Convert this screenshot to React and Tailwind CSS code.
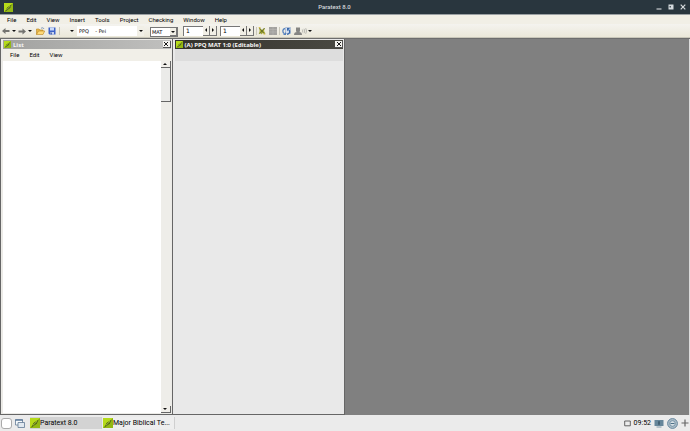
import React from "react";

const UI = "font-['DejaVu_Sans',sans-serif]";

function Logo({ className }) {
  return (
    <svg viewBox="0 0 9 9" className={className} aria-hidden="true">
      <rect width="9" height="9" fill="#7fa012" />
      <path d="M0 0H9L0 9Z" fill="#b5da1a" />
      <path d="M9 1V9H1Z" fill="#93b814" />
      <path d="M1.200 8.500 3.200 4.500 7.500 1.500 6.200 5Z" fill="#3f5510" />
      <path d="M2.500 6.800 6.500 2.800" stroke="#c5df4a" strokeWidth=".8" />
    </svg>
  );
}

function Caret({ dir = "down", className = "w-[4px] h-[2px]" }) {
  const d = {
    down: "M0 0H4L2 2Z",
    up: "M0 2H4L2 0Z",
    left: "M2 0V4L0 2Z",
    right: "M0 0V4L2 2Z",
  }[dir];
  const box = dir === "left" || dir === "right" ? "0 0 2 4" : "0 0 4 2";
  return (
    <svg viewBox={box} className={className} aria-hidden="true">
      <path d={d} fill="#111" />
    </svg>
  );
}

function MenuBar({ items, label, className }) {
  return (
    <nav aria-label={label} className={`flex items-center gap-[10px] font-['Roboto',sans-serif] text-[6px] leading-[8px] text-black ${className}`}>
      {items.map((item) => (
        <button key={item} type="button">{item}</button>
      ))}
    </nav>
  );
}

function TitleBar() {
  return (
    <header className="flex h-[14px] shrink-0 items-center bg-[#29363e] px-1 text-[#d5dadd]">
      <Logo className="h-[9px] w-[9px]" />
      <h1 className="flex-1 text-center font-['Roboto',sans-serif] text-[6px] font-medium leading-[8px]">Paratext 8.0</h1>
      <div className="flex gap-[6px]">
        <button type="button" aria-label="Minimize">
          <svg viewBox="0 0 6 6" className="h-[6px] w-[6px]"><path d="M.5 5H5.500" stroke="#c9ced1" strokeWidth="1.200" /></svg>
        </button>
        <button type="button" aria-label="Maximize">
          <svg viewBox="0 0 6 6" className="h-[6px] w-[6px]"><path d="M.5.5H5.500V5.500H.5Z" fill="#d5dadd" /><path d="M1.500 2H3V3.500H1.500Z" fill="#4b575e" /></svg>
        </button>
        <button type="button" aria-label="Close">
          <svg viewBox="0 0 6 6" className="h-[6px] w-[6px]"><path d="M.7.7 5.300 5.300M5.300.7.7 5.300" stroke="#d5dadd" strokeWidth="1.200" /></svg>
        </button>
      </div>
    </header>
  );
}

function Stepper({ label }) {
  return (
    <div className="flex h-[10px] items-stretch">
      <input
        aria-label={label}
        defaultValue="1"
        className={`w-[20px] border-l border-t border-[#777] bg-white pl-[2px] text-[6px] leading-[8px] outline-none ${UI}`}
      />
      <button type="button" aria-label={`Previous ${label}`} className="flex w-[7px] items-center justify-center border-b border-r border-[#777] bg-[#f1efe6]">
        <Caret dir="left" className="h-[4px] w-[2px]" />
      </button>
      <button type="button" aria-label={`Next ${label}`} className="flex w-[7px] items-center justify-center border-b border-r border-[#777] bg-[#f1efe6]">
        <Caret dir="right" className="h-[4px] w-[2px]" />
      </button>
    </div>
  );
}

function Arrow({ back }) {
  return (
    <svg viewBox="0 0 8 8" className="h-[8px] w-[8px]" aria-hidden="true">
      <path d={back ? "M0 4 3.500 1V3H7.500V5H3.500V7Z" : "M8 4.500 4.500 1.500V3.500H.5V5.500H4.500V7.500Z"} fill="#73736f" />
    </svg>
  );
}

function Toolbar() {
  return (
    <div role="toolbar" aria-label="Standard" className="flex h-[14px] shrink-0 items-center border-b border-[#c9c7ba] bg-linear-to-b from-[#f4f3ef] to-[#ebe8d9] pl-[2px]">
      <button type="button" aria-label="Back" className="flex items-center gap-[2px]"><Arrow back /><Caret className="h-[2px] w-[4px]" /></button>
      <button type="button" aria-label="Forward" className="ml-[2px] flex items-center gap-[2px]"><Arrow /><Caret className="h-[2px] w-[4px]" /></button>
      <button type="button" aria-label="Open" className="ml-[4px]">
        <svg viewBox="0 0 9 8" className="h-[8px] w-[9px]">
          <path d="M.5 7.500V2H3L4 3H7V4" fill="#e7b84b" stroke="#b88420" strokeWidth=".6" />
          <path d="M.5 7.500 2.500 4H8.700L7 7.500Z" fill="#ffda78" stroke="#b88420" strokeWidth=".6" />
          <path d="M5 1.500C6 .3 7.500.7 8 2" fill="none" stroke="#5577a8" strokeWidth=".7" />
        </svg>
      </button>
      <button type="button" aria-label="Save" className="ml-[3px]">
        <svg viewBox="0 0 8 8" className="h-[8px] w-[8px]">
          <path d="M.5.5H7.500V7.500H1.500L.5 6.500Z" fill="#3d62c8" />
          <path d="M2 .5H6V3.500H2Z" fill="#c9d9f8" />
          <path d="M2.300 5H6V7.500H2.300Z" fill="#c9d4ee" />
          <path d="M2.700 5.500H3.700V7.500H2.700Z" fill="#284394" />
        </svg>
      </button>
      <span className="ml-[3px] h-[8px] w-px bg-[#c9c7ba]" />
      <button type="button" aria-label="Project history" className="ml-[10px]"><Caret className="h-[2px] w-[4px]" /></button>
      <div className="relative ml-[3px] flex h-[10px]">
        <select aria-label="Project" className={`w-[67px] appearance-none bg-white pl-[2px] text-[5px] leading-[8px] text-black whitespace-pre ${UI}`}>
          <option>{"PPQ\u00a0\u00a0\u00a0\u00a0- Pei"}</option>
        </select>
        <span className="pointer-events-none absolute inset-y-0 right-0 flex w-[7px] items-center justify-center bg-[#f1efe6]"><Caret /></span>
      </div>
      <div className="relative ml-[6px] flex h-[10px] self-end">
        <select aria-label="Book" className={`w-[28px] appearance-none border border-[#777] bg-white pl-px text-[5px] leading-[8px] text-black ${UI}`}>
          <option>MAT</option>
        </select>
        <span className="pointer-events-none absolute inset-y-px right-px flex w-[7px] items-center justify-center border-b border-r border-[#777] bg-[#f1efe6]"><Caret /></span>
      </div>
      <div className="ml-[5px] flex gap-[3px]">
        <Stepper label="chapter" />
        <Stepper label="verse" />
      </div>
      <span className="ml-[2px] h-[8px] w-px bg-[#c9c7ba]" />
      <button type="button" aria-label="Show all" className="ml-px">
        <svg viewBox="0 0 8 8" className="h-[8px] w-[8px]">
          <path d="M1 1 4 3 7 1 6 4 7.500 6.500 5 6 3 7.500V5.500L.7 7 1.700 4Z" fill="#a8aa35" />
          <path d="M1.500 1 6.500 7M6.500 1 1.500 7" stroke="#68742a" strokeWidth="1" />
          <path d="M.7.7H2.500M5.500 7H7.300" stroke="#d5b631" />
        </svg>
      </button>
      <button type="button" aria-label="Layout" className="ml-[3px]">
        <svg viewBox="0 0 8 8" className="h-[8px] w-[8px]">
          <path d="M0 0H8V8H0Z" fill="#a3a29f" />
          <path d="M0 2.500H8M0 5H8M4 0V8" stroke="#bab9b5" strokeWidth=".6" />
        </svg>
      </button>
      <span className="ml-[2px] h-[8px] w-px bg-[#c9c7ba]" />
      <button type="button" aria-label="Send and receive" className="ml-[2px]">
        <svg viewBox="0 0 9 8" className="h-[8px] w-[9px]">
          <path d="M3.500.5H8.500V6.500H3.500Z" fill="#d6e1f0" stroke="#8ea5c6" strokeWidth=".6" />
          <path d="M3 1.500C.2 2 .2 5.500 2.500 6.800" fill="none" stroke="#5480bd" strokeWidth="1.300" />
          <path d="M1 8H4V5Z" fill="#5480bd" />
          <path d="M5 7.300C8 7 8.500 4 6.500 2.500" fill="none" stroke="#3768ad" strokeWidth="1.300" />
          <path d="M5 1V4.200L8 1Z" fill="#3768ad" />
        </svg>
      </button>
      <button type="button" aria-label="Chat" className="ml-[3px] flex items-center gap-px">
        <svg viewBox="0 0 13 8" className="h-[8px] w-[13px]">
          <path d="M2 .5H6V4.500L5 5C7 5.300 8 6 8 8H0C0 6 1 5.300 3 5L2 4.500Z" fill="#858583" />
          <path d="M8.300 2.500Q9.500 4 8.300 5.500M10 1.800Q11.500 4 10 6.200M11.700 1.200Q13.500 4 11.700 6.800" fill="none" stroke="#aaa9a5" strokeWidth=".8" />
        </svg>
        <Caret className="h-[2px] w-[4px]" />
      </button>
    </div>
  );
}

function ClosePane({ label }) {
  return (
    <button type="button" aria-label={label} className="flex h-[7px] w-[8px] items-center justify-center border-b border-r border-[#555] bg-[#f4f3ef]">
      <svg viewBox="0 0 4 4" className="h-[4px] w-[4px]"><path d="M0 0 4 4M4 0 0 4" stroke="#000" strokeWidth=".9" /></svg>
    </button>
  );
}

function PaneTitle({ title, bar }) {
  return (
    <div className={`flex h-[9px] shrink-0 items-center gap-[2px] pl-px text-[#f4f4f4] ${bar}`}>
      <Logo className="h-[7px] w-[7px]" />
      <h2 className="flex-1 font-['Noto_Sans',sans-serif] text-[6px] font-bold leading-[8px]">{title}</h2>
      <ClosePane label={`Close ${title}`} />
    </div>
  );
}

function ScrollBar() {
  return (
    <div className="flex w-[10px] shrink-0 flex-col bg-[#eeede9]">
      <button type="button" aria-label="Scroll up" className="flex h-[7px] items-center justify-center border-b border-r border-[#666] bg-[#f1efea]"><Caret dir="up" /></button>
      <div className="h-[34px] border-b border-r border-[#666] bg-[#ebebe9]" />
      <div className="flex-1" />
      <button type="button" aria-label="Scroll down" className="flex h-[7px] items-center justify-center border-b border-r border-[#666] bg-[#f1efea]"><Caret /></button>
    </div>
  );
}

function Workspace() {
  return (
    <main className="flex min-h-0 flex-1 border-t border-[#6d6d6d] bg-[#808080]">
      <div className="grid h-full w-1/2 grid-cols-2">
        <section className="flex min-w-0 flex-col border-b border-l border-r border-[#666] bg-[#ecebe7] pb-px pl-[2px] pr-px pt-px">
          <PaneTitle title="List" bar="bg-linear-to-r from-[#a2a2a0] to-[#c0c0be]" />
          <MenuBar label="List" items={["File", "Edit", "View"]} className="h-[12px] shrink-0 bg-[#f1efe8] pl-[7px]" />
          <div className="flex min-h-0 flex-1">
            <div className="flex-1 bg-white" />
            <ScrollBar />
          </div>
        </section>
        <section className="flex min-w-0 flex-col border-b border-r border-[#666] bg-[#e9e9e9] pl-[2px] pr-px pt-px">
          <PaneTitle title="(A) PPQ MAT 1:0 (Editable)" bar="bg-linear-to-r from-[#33322c] to-[#4a4942]" />
          <div className="h-[12px] shrink-0 bg-[#dddddd]" />
          <div className="flex-1" />
        </section>
      </div>
      <div className="ml-auto w-px bg-[#ddd]" />
    </main>
  );
}

function Task({ children, active }) {
  return (
    <button type="button" className={`flex h-[12px] w-[72px] items-center border-r border-[#cfcfcf] text-[7px] leading-[10px] text-black ${active ? "bg-[#d3d3d3]" : "bg-[#eeeeee]"}`}>
      <Logo className="h-[10px] w-[10px] shrink-0" />
      <span className="whitespace-nowrap">{children}</span>
    </button>
  );
}

function TaskBar() {
  return (
    <footer className="flex h-[16px] shrink-0 items-center bg-[#ebebeb] px-px font-['Roboto',sans-serif]">
      <button type="button" aria-label="Start" className="h-[11px] w-[11px] rounded-[3px] border border-[#aaa] bg-white" />
      <button type="button" aria-label="Show desktop" className="ml-[3px]">
        <svg viewBox="0 0 10 9" className="h-[9px] w-[10px]">
          <path d="M.5.8H7.500V6H.5Z" fill="#f7fafc" stroke="#637b96" strokeWidth=".8" />
          <path d="M.2 1H7.800" stroke="#4c6d91" strokeWidth="1.200" />
          <path d="M3 3.500H9.500V8.500H3Z" fill="#e1e9f0" stroke="#637b96" strokeWidth=".8" />
        </svg>
      </button>
      <div className="ml-[5px] flex gap-px">
        <Task active>Paratext 8.0</Task>
        <Task>Major Biblical Te...</Task>
      </div>
      <div className="ml-auto flex items-center gap-[3px]">
        <svg viewBox="0 0 7 7" className="h-[7px] w-[7px]" aria-hidden="true"><path d="M.7 1H6.300V5.800H.7Z" fill="none" stroke="#555" strokeWidth=".9" /></svg>
        <time className="text-[7px] leading-[10px] text-black">09:52</time>
        <svg viewBox="0 0 10 9" className="h-[9px] w-[10px]" aria-hidden="true">
          <path d="M.5 1H9.500V7H.5Z" fill="#66869a" />
          <path d="M4.500 2.200H5.500V5.800H4.500Z" fill="#233d4f" />
          <path d="M2.500 8H7.500" stroke="#829aaa" />
        </svg>
        <svg viewBox="0 0 11 11" className="h-[11px] w-[11px]" aria-hidden="true">
          <circle cx="5.500" cy="5.500" r="4.900" fill="#aebfca" stroke="#65859c" />
          <circle cx="5.500" cy="5.500" r="2.800" fill="#d7e0e5" stroke="#65859c" strokeWidth=".8" />
          <path d="M3.500 5.500H7.500" stroke="#4b6f87" />
        </svg>
        <svg viewBox="0 0 8 8" className="h-[8px] w-[8px]" aria-hidden="true"><path d="M4 .5V7.500M.5 4H7.500" stroke="#666" strokeWidth="1.200" /></svg>
      </div>
    </footer>
  );
}

export default function App() {
  return (
    <div className="flex h-screen flex-col overflow-hidden bg-[#ebebeb]">
      <TitleBar />
      <MenuBar
        label="Main"
        items={["File", "Edit", "View", "Insert", "Tools", "Project", "Checking", "Window", "Help"]}
        className="h-[10px] shrink-0 border-t border-[#9aa0a3] bg-[#f1efe6] pl-[7px]"
      />
      <Toolbar />
      <Workspace />
      <TaskBar />
    </div>
  );
}
